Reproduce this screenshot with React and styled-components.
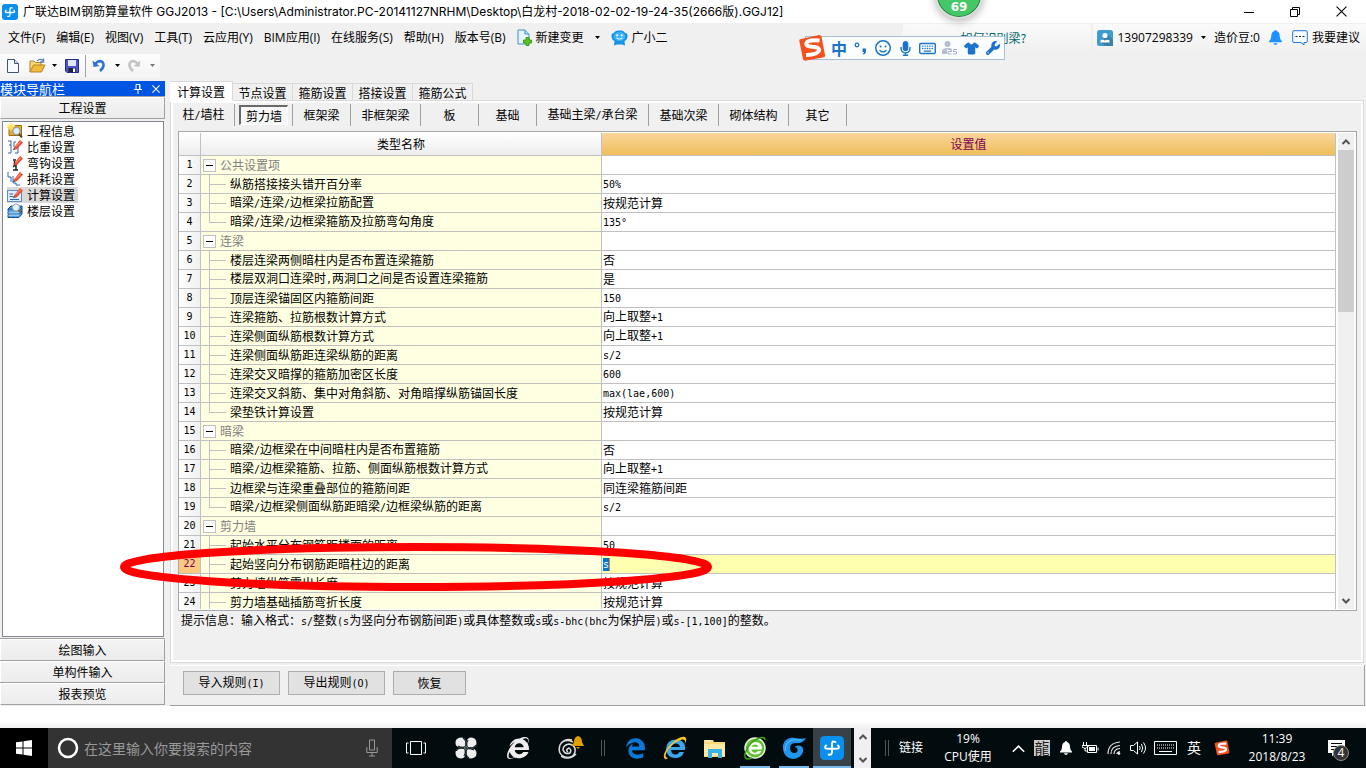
import React from "react";
import styled, { createGlobalStyle, css } from "styled-components";
import {
  FaEdgeLegacy,
  FaInternetExplorer,
  FaMicrophone,
  FaRegKeyboard,
  FaRegFaceSmile,
  FaShirt,
  FaWrench,
} from "react-icons/fa6";

const menus = [
  "文件(F)",
  "编辑(E)",
  "视图(V)",
  "工具(T)",
  "云应用(Y)",
  "BIM应用(I)",
  "在线服务(S)",
  "帮助(H)",
  "版本号(B)",
];

const tabs = ["计算设置", "节点设置", "箍筋设置", "搭接设置", "箍筋公式"];

const categories = [
  { name: "柱/墙柱", width: 62 },
  { name: "剪力墙", width: 58 },
  { name: "框架梁", width: 58 },
  { name: "非框架梁", width: 70 },
  { name: "板", width: 58 },
  { name: "基础", width: 58 },
  { name: "基础主梁/承台梁", width: 112 },
  { name: "基础次梁", width: 70 },
  { name: "砌体结构", width: 70 },
  { name: "其它", width: 58 },
];

const groups = [
  {
    name: "公共设置项",
    items: [
      ["纵筋搭接接头错开百分率", "50%"],
      ["暗梁/连梁/边框梁拉筋配置", "按规范计算"],
      ["暗梁/连梁/边框梁箍筋及拉筋弯勾角度", "135°"],
    ],
  },
  {
    name: "连梁",
    items: [
      ["楼层连梁两侧暗柱内是否布置连梁箍筋", "否"],
      ["楼层双洞口连梁时,两洞口之间是否设置连梁箍筋", "是"],
      ["顶层连梁锚固区内箍筋间距", "150"],
      ["连梁箍筋、拉筋根数计算方式", "向上取整+1"],
      ["连梁侧面纵筋根数计算方式", "向上取整+1"],
      ["连梁侧面纵筋距连梁纵筋的距离", "s/2"],
      ["连梁交叉暗撑的箍筋加密区长度", "600"],
      ["连梁交叉斜筋、集中对角斜筋、对角暗撑纵筋锚固长度", "max(lae,600)"],
      ["梁垫铁计算设置", "按规范计算"],
    ],
  },
  {
    name: "暗梁",
    items: [
      ["暗梁/边框梁在中间暗柱内是否布置箍筋", "否"],
      ["暗梁/边框梁箍筋、拉筋、侧面纵筋根数计算方式", "向上取整+1"],
      ["边框梁与连梁重叠部位的箍筋间距", "同连梁箍筋间距"],
      ["暗梁/边框梁侧面纵筋距暗梁/边框梁纵筋的距离", "s/2"],
    ],
  },
  {
    name: "剪力墙",
    more: true,
    items: [
      ["起始水平分布钢筋距楼面的距离", "50"],
      ["起始竖向分布钢筋距暗柱边的距离", "s"],
      ["剪力墙纵筋露出长度", "按规范计算"],
      ["剪力墙基础插筋弯折长度", "按规范计算"],
    ],
  },
];

const ACTIVE_ROW = 22;

const rows = groups.flatMap((group) => [
  { group: true, name: group.name, value: "" },
  ...group.items.map(([name, value], idx) => ({
    name,
    value,
    last: !group.more && idx === group.items.length - 1,
  })),
]);

// latin characters take half the width of a chinese one
const Song = ({ children }) =>
  children
    .split(/([\x20-\x7e°]+)/)
    .map((part, idx) => (idx % 2 ? <Half key={idx}>{part}</Half> : part));

/* ---------- icons ---------- */

const AppLogo = ({ size }) => (
  <svg width={size} height={size} viewBox="0 0 16 16">
    <rect width="16" height="16" rx="3" fill="#0a8fee" />
    <path
      d="M10.300 4Q8 2.800 8 5.500V10.500Q8 13 5.800 12.300M4 6.300Q2.300 8.500 5 8.500H11Q13.700 8.500 12 6.300"
      fill="none"
      stroke="#fff"
      strokeWidth="1.300"
      strokeLinecap="round"
    />
  </svg>
);

const Arrow = ({ color = "#000" }) => (
  <svg width="5" height="3" viewBox="0 0 5 3">
    <path d="M0 0H5L2.5 3Z" fill={color} />
  </svg>
);

const Chevron = ({ up, size = 8, color = "#555", weight = 2 }) => (
  <svg width={size} height={size} viewBox="0 0 8 8">
    <path d={up ? "M0.5 6L4 2.5L7.5 6" : "M0.5 2L4 5.5L7.5 2"} fill="none" stroke={color} strokeWidth={weight} />
  </svg>
);

const NewChangeIcon = () => (
  <svg width="15" height="17" viewBox="0 0 15 17">
    <path d="M1 1H8L12 5V15H1Z" fill="#e8f5fc" stroke="#3f93c9" />
    <path d="M8 1V5H12" fill="#b5dcf0" stroke="#3f93c9" />
    <path d="M9 8.500H12V11H14.500V14H12V16.500H9V14H6.500V11H9Z" fill="#5cc61c" stroke="#2c8f0c" strokeWidth=".8" />
  </svg>
);

const MascotIcon = () => (
  <svg width="17" height="16" viewBox="0 0 17 16">
    <path d="M3 3Q4 0 8.500 .5Q13 0 14 3Q17 3 16.500 7Q16 10 13.500 11L14 15.500L11 14.500H6L3 15.500L3.500 11Q1 10 .5 7Q0 3 3 3Z" fill="#1593e6" />
    <ellipse cx="8.500" cy="6.500" rx="5.800" ry="4.500" fill="#3fb2f5" />
    <circle cx="6.200" cy="5.300" r="1.100" fill="#fff" />
    <circle cx="10.800" cy="5.300" r="1.100" fill="#fff" />
    <path d="M5.500 8Q8.500 10.500 11.500 8" fill="none" stroke="#fff" />
  </svg>
);

const FileIcon = () => (
  <svg width="12" height="14" viewBox="0 0 12 14">
    <path d="M.5 .5H7.500L11.500 4.500V13.500H.5Z" fill="#f7fbff" stroke="#44566f" />
    <path d="M7.500 .5V4.500H11.500" fill="#cfdcea" stroke="#44566f" />
  </svg>
);

const OpenIcon = () => (
  <svg width="17" height="15" viewBox="0 0 17 15">
    <path d="M1 14V3H5L6.500 4.500H12V7" fill="#f6d77a" stroke="#b08728" />
    <path d="M1 14L4.500 7H16L12.500 14Z" fill="#f3b93d" stroke="#b08728" />
    <path d="M8 3Q11 0 14 2.500M14.500 .5V4H11" fill="none" stroke="#5b7fae" strokeWidth="1.300" />
  </svg>
);

const SaveIcon = () => (
  <svg width="14" height="14" viewBox="0 0 14 14">
    <path d="M.5 .5H13.500V13.500H2L.5 12Z" fill="#4b55c9" stroke="#272d86" />
    <rect x="3" y="1" width="8" height="6" fill="#dfe6f7" />
    <rect x="3.500" y="9" width="7" height="4" fill="#20242e" />
    <rect x="8" y="9.500" width="2" height="3.500" fill="#fff" />
  </svg>
);

const UndoIcon = ({ color, flip }) => (
  <svg width="14" height="14" viewBox="0 0 14 14">
    <g transform={flip ? "matrix(-1 0 0 1 14 0)" : undefined}>
      <path d="M3 5Q7 .5 10.500 3Q13.500 7 8 12" fill="none" stroke={color} strokeWidth="2.500" />
      <path d="M.5 1.500L1.500 8L7.500 7Z" fill={color} />
    </g>
  </svg>
);

const UserIcon = () => (
  <svg width="16" height="16" viewBox="0 0 16 16">
    <rect width="16" height="16" rx="2.500" fill="#3f9cd0" />
    <path d="M11 5L16 10V16H8L4 12Z" fill="#397fa8" />
    <circle cx="8" cy="5.500" r="2.600" fill="#fff" />
    <path d="M3.500 12.500V10.500Q5 8.800 8 10.500Q11 8.800 12.500 10.500V12.500Z" fill="#fff" />
  </svg>
);

const BellIcon = ({ color, size = 14 }) => (
  <svg width={size} height={size} viewBox="0 0 14 14">
    <path d="M7 0Q8 0 8 1Q11 2 11 6Q11 9 13 10.500V11.500H1V10.500Q3 9 3 6Q3 2 6 1Q6 0 7 0Z" fill={color} />
    <path d="M5 12.300H9Q8.500 14 7 14Q5.500 14 5 12.300Z" fill={color} />
  </svg>
);

const BubbleIcon = () => (
  <svg width="16" height="16" viewBox="0 0 16 16">
    <path d="M2 .7H14Q15.300 .7 15.300 2V11.300Q15.300 12.500 14 12.500H12V15L9 12.500H2Q.7 12.500 .7 11.300V2Q.7 .7 2 .7Z" fill="#f6fbff" stroke="#2277dd" />
    <path d="M3.500 6.500H13" stroke="#222" strokeDasharray="2 1.500" />
  </svg>
);

const SogouLogo = ({ size }) => (
  <svg width={size} height={size} viewBox="0 0 28 28">
    <path d="M3 5Q1 5 1.300 7L5 25Q5.500 27 8 26.600L25 23.500Q27.500 23 27 21L23.500 2.500Q23 .7 21 1Z" fill="#f4511e" />
    <path
      d="M21.500 6.500Q9 5.500 8.300 9.500Q8 12.500 14 12.800Q21.500 13 21 16.500Q20 20.500 8 21"
      fill="none"
      stroke="#fff"
      strokeWidth="4"
    />
  </svg>
);

const PersonIcon = () => (
  <svg width="17" height="16" viewBox="0 0 17 16">
    <circle cx="6.500" cy="4" r="3" fill="#b4bdd0" />
    <path d="M1 14V11Q2 8 6.500 8Q10 8 11 9H6V14Z" fill="#b4bdd0" />
    <path d="M7 9.500H10.500V11.500H7V14H10.500M16 9.500H12.500V11.500H15.500V14H12" fill="none" stroke="#a9b3c8" />
  </svg>
);

const PinIcon = () => (
  <svg width="8" height="10" viewBox="0 0 8 10">
    <path d="M2 .5H6V5.500H2ZM0 5.500H8M4 5.500V10M5.500 1V5" fill="none" stroke="#fff" />
  </svg>
);

const CrossIcon = ({ size, color, weight = 1 }) => (
  <svg width={size} height={size} viewBox="0 0 10 10">
    <path d="M.5 .5L9.500 9.500M9.500 .5L.5 9.500" stroke={color} strokeWidth={weight} />
  </svg>
);

const Pencil = () => (
  <>
    <path d="M7 8.500L13 1L16 3.500L9.500 10.500Z" fill="#ee4a2e" />
    <path d="M6 11L7 8.500L9 10.500Z" fill="#51402e" />
    <path d="M9 7.500L14 2.500" stroke="#ffa48c" />
  </>
);

const sideIcons = {
  info: (
    <>
      <path d="M2 4H7L8 2.500H14.500V12.500H2Z" fill="#e5aa32" stroke="#9b6c18" />
      <path d="M4 0V8M0 4H8M1.500 1.500L6.500 6.500M6.500 1.500L1.500 6.500" stroke="#ffe25a" strokeWidth="1.300" />
      <circle cx="9.500" cy="8" r="3.700" fill="#dceefc" stroke="#8091a6" />
      <path d="M12 11L15 14.500" stroke="#6b4a1a" strokeWidth="2" />
    </>
  ),
  weight: (
    <>
      <path d="M1 2H4V14H1M4 6H2M9 3H7V8M8 14H11V8" fill="none" stroke="#3a64b4" />
      <Pencil />
    </>
  ),
  hook: (
    <>
      <path d="M6 5H9M7.500 6V9M6 12L9 10V15M6 15H11" fill="none" stroke="#222" strokeWidth="1.500" />
      <Pencil />
    </>
  ),
  loss: (
    <>
      <path d="M1 1V6H4V11M6 5V12H9V14M9 14H13" fill="none" stroke="#3a64b4" />
      <Pencil />
    </>
  ),
  calc: (
    <>
      <rect x=".5" y="3.500" width="14" height="11" fill="#dcebff" stroke="#5c8bd0" />
      <path d="M2.500 7H6M2.500 9.500H6M3 12.500H12" stroke="#3a64b4" />
      <Pencil />
    </>
  ),
  floor: (
    <>
      <path d="M1 6L4 3H15L12 6ZM1 6V8.500H12L15 5M1 9V11.500H12L15 8M1 12V14.500H12L15 11V3" fill="#4fa0e0" stroke="#14518d" />
      <path d="M1.500 9H12M1.500 12H12" stroke="#d7efff" />
      <circle cx="9" cy="4.500" r="3.500" fill="#e4f2fc" stroke="#9aa7b5" />
      <path d="M11.500 7L14 9.500" stroke="#8c5c20" strokeWidth="1.500" />
    </>
  ),
};

const navItems = [
  { name: "工程信息", icon: "info" },
  { name: "比重设置", icon: "weight" },
  { name: "弯钩设置", icon: "hook" },
  { name: "损耗设置", icon: "loss" },
  { name: "计算设置", icon: "calc", active: true },
  { name: "楼层设置", icon: "floor" },
];

/* ---------- sections ---------- */

const Header = () => (
  <>
    <TitleBar>
      <AppLogo size={16} />
      <TitleText>
        广联达BIM钢筋算量软件 GGJ2013 - [C:\Users\Administrator.PC-20141127NRHM\Desktop\白龙村-2018-02-02-19-24-35(2666版).GGJ12]
      </TitleText>
      <WindowButton aria-label="最小化">
        <svg width="10" height="10" viewBox="0 0 10 10"><path d="M0 5.500H10" stroke="#000" /></svg>
      </WindowButton>
      <WindowButton aria-label="还原">
        <svg width="10" height="10" viewBox="0 0 10 10">
          <path d="M.5 2.500H7.500V9.500H.5ZM2.500 2.500V.5H9.500V7.500H7.500" fill="none" stroke="#000" />
        </svg>
      </WindowButton>
      <WindowButton aria-label="关闭"><CrossIcon size={11} color="#000" /></WindowButton>
    </TitleBar>
    <MenuBar>
      {menus.map((name) => (
        <MenuButton key={name}>{name}</MenuButton>
      ))}
      <MenuButton><NewChangeIcon />新建变更</MenuButton>
      <ArrowButton aria-label="新建变更选项"><Arrow /></ArrowButton>
      <MenuButton><MascotIcon />广小二</MenuButton>
      <HintBox><a href="#help">如何识别梁?</a></HintBox>
      <UserBox>
        <UserIcon />
        <UserName>13907298339</UserName>
        <Arrow />
        <Beans>造价豆:0</Beans>
        <BellIcon color="#1e90ff" size={15} />
        <MenuButton><BubbleIcon />我要建议</MenuButton>
      </UserBox>
    </MenuBar>
    <ToolBar>
      <Tools>
        <ToolButton $width={24} aria-label="新建"><FileIcon /></ToolButton>
        <ToolButton $width={24} aria-label="打开"><OpenIcon /></ToolButton>
        <ToolButton $width={10} aria-label="打开选项"><Arrow /></ToolButton>
        <ToolButton $width={26} aria-label="保存"><SaveIcon /></ToolButton>
        <ToolDivider />
        <ToolButton $width={26} aria-label="撤销"><UndoIcon color="#2f6fd6" /></ToolButton>
        <ToolButton $width={10} aria-label="撤销选项"><Arrow /></ToolButton>
        <ToolButton $width={24} aria-label="重做"><UndoIcon color="#c4c4c4" flip /></ToolButton>
        <ToolButton $width={12} aria-label="重做选项"><Arrow color="#777" /></ToolButton>
      </Tools>
    </ToolBar>
  </>
);

const Navigator = () => (
  <Sidebar>
    <Caption>
      <span>模块导航栏</span>
      <CaptionButton aria-label="固定"><PinIcon /></CaptionButton>
      <CaptionButton aria-label="关闭导航栏"><CrossIcon size={8} color="#fff" weight={1.3} /></CaptionButton>
    </Caption>
    <PanelButton>工程设置</PanelButton>
    <NavList>
      {navItems.map(({ name, icon, active }) => (
        <li key={name}>
          <NavButton $active={active}>
            <svg width="16" height="16" viewBox="0 0 16 16">{sideIcons[icon]}</svg>
            <span>{name}</span>
          </NavButton>
        </li>
      ))}
    </NavList>
    <PanelButton>绘图输入</PanelButton>
    <PanelButton>单构件输入</PanelButton>
    <PanelButton>报表预览</PanelButton>
  </Sidebar>
);

const SettingsTable = () => (
  <TableFrame>
    <TableScroll>
      <Table>
        <colgroup>
          <col style={{ width: 22 }} />
          <col style={{ width: 401 }} />
          <col />
        </colgroup>
        <thead>
          <tr>
            <HeadCell aria-label="序号" />
            <HeadCell>类型名称</HeadCell>
            <HeadCell $active>设置值</HeadCell>
          </tr>
        </thead>
        <tbody>
          {rows.map(({ group, name, value, last }, idx) => {
            const active = idx + 1 === ACTIVE_ROW;
            return (
              <tr key={idx}>
                <NumberCell $active={active}>{idx + 1}</NumberCell>
                <NameCell>
                  <NameContent $group={group}>
                    {group ? <FoldButton aria-label={"折叠" + name} /> : <Branch $last={last} />}
                    <span><Song>{name}</Song></span>
                  </NameContent>
                </NameCell>
                <ValueCell $active={active}>
                  {active ? <ValueInput aria-label={name} defaultValue={value} /> : <Song>{value}</Song>}
                </ValueCell>
              </tr>
            );
          })}
        </tbody>
      </Table>
    </TableScroll>
    <ScrollBar>
      <ScrollButton aria-label="向上滚动"><Chevron up /></ScrollButton>
      <ScrollThumb />
      <ScrollButton aria-label="向下滚动"><Chevron /></ScrollButton>
    </ScrollBar>
  </TableFrame>
);

const Workspace = () => (
  <Work>
    <TabRow>
      {tabs.map((name, idx) => (
        <Tab key={name} $active={idx === 0}>{name}</Tab>
      ))}
    </TabRow>
    <TabPage>
      <Categories>
        {categories.map(({ name, width }, idx) => (
          <Category key={name} $width={width}>
            <CategoryButton $pressed={idx === 1}><Song>{name}</Song></CategoryButton>
          </Category>
        ))}
      </Categories>
      <SettingsTable />
      <Hint>
        <Song>提示信息：输入格式：s/整数(s为竖向分布钢筋间距)或具体整数或s或s-bhc(bhc为保护层)或s-[1,100]的整数。</Song>
      </Hint>
    </TabPage>
    <Actions>
      <ActionButton $width={97}><Song>导入规则(I)</Song></ActionButton>
      <ActionButton $width={97}><Song>导出规则(O)</Song></ActionButton>
      <ActionButton $width={73}>恢复</ActionButton>
    </Actions>
  </Work>
);

const InputMethod = () => (
  <ImeBar>
    <SogouLogo size={28} />
    <ImeItem as="span">中</ImeItem>
    <ImeItem aria-label="中文标点">
      <svg width="14" height="14" viewBox="0 0 14 14">
        <circle cx="3" cy="4" r="1.800" fill="none" stroke="#1b74c9" strokeWidth="1.300" />
        <path d="M8.500 7.500H12V10.500Q12 13 9 13.500L8.700 12.500Q10 12 10 11H8.500Z" fill="#1b74c9" />
      </svg>
    </ImeItem>
    <ImeItem aria-label="表情"><FaRegFaceSmile size={16} /></ImeItem>
    <ImeItem aria-label="语音"><FaMicrophone size={15} /></ImeItem>
    <ImeItem aria-label="软键盘"><FaRegKeyboard size={17} /></ImeItem>
    <ImeItem aria-label="账户"><PersonIcon /></ImeItem>
    <ImeItem aria-label="皮肤"><FaShirt size={15} /></ImeItem>
    <ImeItem aria-label="工具箱"><FaWrench size={14} /></ImeItem>
  </ImeBar>
);

const TaskBar = () => (
  <Tasks>
    <TaskButton $width={48} $bg="#000" aria-label="开始">
      <svg width="16" height="16" viewBox="0 0 16 16">
        <path d="M0 2.300L6.500 1.400V7.500H0ZM7.500 1.200L16 0V7.500H7.500ZM0 8.500H6.500V14.600L0 13.700ZM7.500 8.500H16V16L7.500 14.800Z" fill="#fff" />
      </svg>
    </TaskButton>
    <Search>
      <svg width="24" height="24" viewBox="0 0 24 24">
        <circle cx="12" cy="12" r="9" fill="none" stroke="#fff" strokeWidth="2.500" />
      </svg>
      <SearchInput aria-label="搜索" placeholder="在这里输入你要搜索的内容" />
      <svg width="12" height="18" viewBox="0 0 12 18">
        <path d="M3.500 1H8.500V11H3.500ZM.8 8V13.500H11.200V8M6 13.500V17M3 17H9" fill="none" stroke="#999" />
      </svg>
    </Search>
    <TaskButton $width={48} aria-label="任务视图">
      <svg width="20" height="14" viewBox="0 0 20 14">
        <path d="M4.500 .5H15.500V13.500H4.500ZM2.500 2H.5V12H2.500M17.500 2H19.500V12H17.500" fill="none" stroke="#fff" />
      </svg>
    </TaskButton>
    <TaskButton $width={52} aria-label="应用">
      <svg width="22" height="22" viewBox="0 0 22 22">
        <g fill="#eee">
          <path d="M10.500 10.500H5Q.5 10 .5 5.500Q.5 .8 6 .5Q10.500 .5 10.500 5Z" />
          <path d="M11.500 10.500V5Q12 .5 16.500 .5Q21.300 .8 21.500 6Q21.500 10.500 17 10.500Z" />
          <path d="M11.500 11.500H17Q21.500 12 21.500 16.500Q21.300 21.200 16 21.500Q11.500 21.500 11.500 17Z" />
          <path d="M10.500 11.500V17Q10 21.500 5.500 21.500Q.8 21.300 .5 16Q.5 11.500 5 11.500Z" />
        </g>
        <path d="M3 9Q9 12 11 8Q12 4 8 1M13 3Q10 9 14 11Q18 12 21 8M19 13Q12 10 11 14Q10 18 14 21M9 19Q12 13 8 11Q4 10 1 14" fill="none" stroke="#061014" />
      </svg>
    </TaskButton>
    <TaskButton $width={52} aria-label="浏览器"><FaInternetExplorer size={22} color="#eee" /></TaskButton>
    <TaskButton $width={54} aria-label="提醒">
      <svg width="28" height="26" viewBox="0 0 28 26">
        <path d="M16 7Q7 3 3 10Q0 19 8 22Q16 24 18 17Q19 10 12 9Q6 10 6 15Q8 20 13 18Q15 15 12 13Q8 15 11 17M4 8Q9 3 15 5M4 21Q12 26 19 19" fill="none" stroke="#ddd" strokeWidth="1.500" />
        <path d="M21 1Q25 2 25 7L27 11H15L17 7Q17 2 21 1Z" fill="#e0a000" />
        <path d="M19 12H23L21 14Z" fill="#e0a000" />
      </svg>
    </TaskButton>
    <Grip $width={17} />
    <TaskButton $width={40} aria-label="Edge"><FaEdgeLegacy size={21} color="#0a78d7" /></TaskButton>
    <TaskButton $width={40} aria-label="Internet Explorer">
      <svg width="26" height="26" viewBox="0 0 26 26">
        <path d="M22 17H17.500Q16 19.500 13.500 19.500Q9.500 19.500 9 15H23Q24 5 14 4.500Q4 5 4 14.500Q5 23 13.500 23Q20 23 22 17ZM9 12Q10 8.500 13.500 8.500Q17.500 8.500 18 12Z" fill="#3aa7ec" />
        <path d="M3 24Q-1 20 8 10Q18 0 23 2Q26 4 22 10Q25 4 20 4.500Q13 6 6 15Q1 22 6 23Q4 25 3 24Z" fill="#f7c325" />
      </svg>
    </TaskButton>
    <TaskButton $width={40} aria-label="文件资源管理器">
      <svg width="22" height="19" viewBox="0 0 22 19">
        <path d="M0 1H9L10 3H21V18H0Z" fill="#f8d775" />
        <path d="M1 2H7" stroke="#fff" />
        <path d="M0 5H21V17H0Z" fill="#ffe9a2" />
        <path d="M4 10H18V19H14V14H8V19H4Z" fill="#38b4e8" />
      </svg>
    </TaskButton>
    <TaskButton $width={40} $open aria-label="360浏览器">
      <svg width="24" height="26" viewBox="0 0 24 26">
        <circle cx="12" cy="13" r="10" fill="#5dc22d" stroke="#e4f5dc" strokeWidth="1.500" />
        <path d="M18.500 16H15Q14 17.800 12.300 17.800Q9 17.800 8.500 14.500H19Q19.500 7 12.300 7Q5.500 7 5.500 13Q6 19.500 12 19.500Q17 19.500 18.500 16ZM8.500 11.800Q9.500 9.500 12.300 9.500Q15 9.500 15.500 11.800Z" fill="#fff" />
        <path d="M22 5Q22 0 12 5Q4 11 2 19Q1 26 9 23" fill="none" stroke="#3b9f18" strokeWidth="1.500" />
      </svg>
    </TaskButton>
    <TaskButton $width={38} $open aria-label="广联达">
      <svg width="24" height="24" viewBox="0 0 24 24">
        <path d="M24 2Q21 8 14 7Q8 7 8 12Q8 17 12.500 17Q16 17 15.500 13Q15 11 12.500 11Q15 8.500 19 10Q22 12 21 16Q18 23 11 23Q2 22 1 13Q0 3 10 1.500Q19 3.500 24 2Z" fill="#2096ee" />
        <path d="M3 15Q3 5 12 3.500Q17 4.500 20 4" fill="none" stroke="#5cc4fb" />
      </svg>
    </TaskButton>
    <TaskButton $width={38} $open $bg="#374146" aria-label="GGJ2013"><AppLogo size={24} /></TaskButton>
    <TaskScroll>
      <ScrollButton aria-label="上一组"><Chevron up /></ScrollButton>
      <ScrollButton aria-label="下一组"><Chevron /></ScrollButton>
    </TaskScroll>
    <Tray>
      <Grip $width={10} />
      <TrayText $width={38}>链接</TrayText>
      <TrayText $width={76}>19%<br />CPU使用</TrayText>
      <TrayItem aria-label="显示隐藏的图标"><Chevron up size={13} color="#fff" weight={1} /></TrayItem>
      <TrayItem><Dragon>龍</Dragon></TrayItem>
      <TrayItem aria-label="通知"><BellIcon color="#fff" /></TrayItem>
      <TrayItem aria-label="电源">
        <svg width="17" height="12" viewBox="0 0 17 12">
          <path d="M5.500 3.500H14.500V10.500H5.500ZM16 5.500V8.500M1.500 0V3M4.500 0V3M0 3.500H6V5Q3 8 0 5ZM3 6V9H5" fill="none" stroke="#fff" />
          <path d="M7 5H13V9H7Z" fill="#fff" />
        </svg>
      </TrayItem>
      <TrayItem aria-label="网络">
        <svg width="14" height="14" viewBox="0 0 14 14">
          <path d="M1 13Q1 2 13 1M4 13Q4 5 13 4.500M7 13Q7 8 13 7.500M10 13Q10 11 13 10.500" fill="none" stroke="#ddd" strokeWidth="1.200" />
          <circle cx="12" cy="12.500" r="1.300" fill="#fff" />
        </svg>
      </TrayItem>
      <TrayItem aria-label="音量">
        <svg width="17" height="14" viewBox="0 0 17 14">
          <path d="M.5 4.500H3.500L7.500 1V13L3.500 9.500H.5ZM9.500 5Q11 7 9.500 9M11.500 3Q14 7 11.500 11M13.500 1.500Q17.500 7 13.500 12.500" fill="none" stroke="#fff" />
        </svg>
      </TrayItem>
      <TrayItem $width={30} aria-label="触摸键盘">
        <svg width="23" height="14" viewBox="0 0 23 14">
          <path d="M.5 .5H22.500V13.500H.5Z" fill="none" stroke="#fff" />
          <path d="M3 4H21M3 7H21" stroke="#fff" strokeDasharray="1 1" />
          <path d="M5 10.500H18" stroke="#fff" />
        </svg>
      </TrayItem>
      <TrayItem $width={28}>英</TrayItem>
      <TrayItem $width={28} aria-label="搜狗输入法"><SogouLogo size={16} /></TrayItem>
      <TrayText $width={82}>11:39<br />2018/8/23</TrayText>
      <Notice aria-label="操作中心">
        <svg width="17" height="17" viewBox="0 0 17 17">
          <path d="M0 0H17V13H7L4 16.500V13H0Z" fill="#fff" />
          <path d="M3 3.500H14M3 6.500H14M3 9.500H10" stroke="#000" />
        </svg>
        <Badge>4</Badge>
      </Notice>
    </Tray>
  </Tasks>
);

const App = () => (
  <Page>
    <GlobalStyle />
    <Header />
    <Main>
      <Navigator />
      <Workspace />
    </Main>
    <StatusBar />
    <TaskBar />
    <InputMethod />
    <SpeedBall>69</SpeedBall>
    <Marker viewBox="0 0 594 50">
      <ellipse cx="297" cy="25" rx="292" ry="20" fill="none" stroke="#fe0000" strokeWidth="8" />
    </Marker>
  </Page>
);

export default App;

/* ---------- styles ---------- */

const GlobalStyle = createGlobalStyle`
  * {
    box-sizing: border-box;
  }

  body {
    margin: 0;
    overflow: hidden;
    font-family: "Noto Sans CJK SC", sans-serif;
    font-size: 12px;
    line-height: 18px;
    color: #000;
  }

  button {
    font: inherit;
    color: inherit;
    padding: 0;
    border: 0;
    background: none;
    white-space: nowrap;
  }

  svg {
    display: block;
    flex: none;
  }
`;

const uiFont = css`
  font-family: "Open Sans", "Noto Sans CJK SC", sans-serif;
`;

const Half = styled.span`
  font-family: "DejaVu Sans Mono", monospace;
  font-size: 10px;
`;

const Page = styled.div`
  position: relative;
  display: flex;
  flex-direction: column;
  height: 100vh;
  background: #f0f0f0;
`;

const TitleBar = styled.header`
  display: flex;
  align-items: center;
  height: 23px;
  padding: 0 2px;
  background: #fff;
`;

const TitleText = styled.h1`
  flex: 1;
  margin: 0 0 0 5px;
  font-family: Inter, "Noto Sans CJK SC", sans-serif;
  font-size: 12px;
  font-weight: 400;
  white-space: nowrap;
`;

const WindowButton = styled.button`
  width: 46px;
  height: 20px;
  display: flex;
  align-items: center;
  justify-content: center;
`;

const MenuBar = styled.nav`
  ${uiFont}
  display: flex;
  align-items: center;
  gap: 11px;
  height: 31px;
  padding: 0 0 2px 8px;
`;

const MenuButton = styled.button`
  display: flex;
  align-items: center;
  gap: 4px;
`;

const ArrowButton = styled.button`
  width: 5px;
`;

const HintBox = styled.div`
  width: 188px;
  height: 28px;
  margin-left: auto;
  padding: 5px 0 0 57px;
  background: linear-gradient(#fafafa, #f0f0f0);
  border-radius: 3px;

  a {
    font-family: "Noto Sans CJK SC", sans-serif;
    color: #006666;
    text-decoration: none;
  }
`;

const UserBox = styled.div`
  display: flex;
  align-items: center;
  height: 28px;
  margin-left: -9px;
  padding: 0 6px 0 4px;
  background: linear-gradient(#fafafa, #f0f0f0);
`;

const UserName = styled.span`
  margin: 0 8px 0 4px;
`;

const Beans = styled.span`
  margin: 0 8px 0 8px;

  & + svg + button {
    margin-left: 9px;
  }
`;

const ToolBar = styled.div`
  height: 27px;
`;

const Tools = styled.div`
  display: flex;
  align-items: center;
  width: 160px;
  height: 23px;
  padding-left: 1px;
  background: linear-gradient(#fdfdfd, #f4f4f4);
`;

const ToolButton = styled.button`
  display: flex;
  justify-content: center;
  width: ${({ $width }) => $width}px;
`;

const ToolDivider = styled.span`
  width: 1px;
  height: 22px;
  background: #a0a0a0;
`;

const Main = styled.main`
  flex: 1;
  display: flex;
  gap: 5px;
  min-height: 0;
`;

const Sidebar = styled.aside`
  display: flex;
  flex-direction: column;
  width: 165px;
  padding-bottom: 1px;
`;

const Caption = styled.div`
  display: flex;
  align-items: center;
  height: 15px;
  margin-bottom: 1px;
  color: #fff;
  background: #0054e3;
  font-size: 13px;
  line-height: 13px;

  span {
    flex: 1;
  }
`;

const CaptionButton = styled.button`
  display: flex;
  justify-content: center;
  width: 18px;
`;

const PanelButton = styled.button`
  height: 22px;
  border: 1px solid #a0a0a0;
  border-left-color: #fff;
  border-top-color: #fff;
  box-shadow: 0 -1px #a0a0a0;
  background: linear-gradient(#f4f4f4, #ececec);
`;

const NavList = styled.ul`
  flex: 1;
  margin: 2px 1px 2px 2px;
  padding: 1px 4px;
  list-style: none;
  background: #fff;
  border: 1px solid #828790;
`;

const NavButton = styled.button`
  display: flex;
  gap: 4px;
  height: 16px;
  padding-right: 3px;
  line-height: 16px;

  ${({ $active }) =>
    $active &&
    css`
      background: #d9d9d9;
    `}
`;

const Work = styled.section`
  flex: 1;
  display: flex;
  flex-direction: column;
  min-width: 0;
  padding-right: 1px;
`;

const TabRow = styled.div`
  display: flex;
  align-items: flex-end;
  height: 19px;
`;

const Tab = styled.button`
  width: 60px;
  height: 17px;
  line-height: 15px;
  border: 1px solid #d9d9d9;
  border-left: 0;
  border-bottom: 0;

  ${({ $active }) =>
    $active &&
    css`
      z-index: 1;
      width: 63px;
      height: 19px;
      background: #fff;
      box-shadow: 0 2px #fff;
    `}
`;

const TabPage = styled.div`
  flex: 1;
  display: flex;
  flex-direction: column;
  min-height: 0;
  margin-right: 1px;
  border: 1px solid #d9d9d9;
  box-shadow: inset 0 0 0 2px #fff;
  padding: 3px 6px 0 2px;
`;

const Categories = styled.div`
  display: flex;
  height: 22px;
  margin-bottom: 5px;
`;

const Category = styled.div`
  display: flex;
  align-items: center;
  justify-content: center;
  width: ${({ $width }) => $width}px;
  border-right: 1px solid #a0a0a0;
`;

const CategoryButton = styled.button`
  height: 20px;
  padding: 0 5px;
  line-height: 18px;

  ${({ $pressed }) =>
    $pressed &&
    css`
      border: 1px solid #fff;
      border-top: 2px solid #696969;
      border-left: 2px solid #696969;
      background: #f7f7f7;
    `}
`;

const TableFrame = styled.div`
  flex: 1;
  display: flex;
  gap: 2px;
  min-height: 0;
  margin-left: 5px;
  padding: 1px 2px 1px 0;
  border: 1px solid #a7a6aa;
  background: #fff;
`;

const TableScroll = styled.div`
  flex: 1;
  overflow: hidden;
`;

const Table = styled.table`
  width: 100%;
  table-layout: fixed;
  border-collapse: separate;
  border-spacing: 0;

  th,
  td {
    padding: 0;
    border-right: 1px solid #c0c0c0;
    border-bottom: 1px solid #c0c0c0;
    white-space: nowrap;
  }

  td {
    height: 19px;
  }
`;

const HeadCell = styled.th`
  height: 23px;
  font-weight: 400;
  background: linear-gradient(#fff, #ededed);

  ${({ $active }) =>
    $active &&
    css`
      color: #7d0053;
      background: linear-gradient(#f9d59b, #efbf5c);
    `}
`;

const NumberCell = styled.td`
  font-family: "DejaVu Sans Mono", monospace;
  font-size: 10px;
  text-align: center;
  background: linear-gradient(90deg, #fff, #f0f0f0);

  ${({ $active }) =>
    $active &&
    css`
      color: #7d0053;
      background: #fbc97f;
    `}
`;

const NameCell = styled.td`
  background: #ffffe1;
`;

const NameContent = styled.div`
  display: flex;
  align-items: center;
  gap: 4px;
  height: 18px;
  padding-left: ${({ $group }) => ($group ? 2 : 8)}px;
  color: ${({ $group }) => ($group ? "#808080" : "#000")};
`;

const FoldButton = styled.button`
  width: 13px;
  height: 13px;
  border: 1px solid #c0c0c0;
  background: linear-gradient(#000, #000) center / 7px 1px no-repeat #fff;
`;

const Branch = styled.span`
  width: 17px;
  height: 18px;
  background:
    linear-gradient(#c0c0c0, #c0c0c0) 0 9px / 17px 1px no-repeat,
    linear-gradient(#c0c0c0, #c0c0c0) 0 0 / 1px ${({ $last }) => ($last ? "9px" : "18px")} no-repeat;
`;

const ValueCell = styled.td`
  && {
    padding-left: 1px;
  }
  line-height: 16px;
  background: ${({ $active }) => ($active ? "#ffffb0" : "#fff")};
`;

const ValueInput = styled.input`
  display: block;
  width: 7px;
  height: 13px;
  padding: 0;
  border: 0;
  border-right: 1px solid #e08040;
  color: #fff;
  background: #0078d7;
  font-family: "DejaVu Sans Mono", monospace;
  font-size: 10px;
`;

const ScrollBar = styled.div`
  display: flex;
  flex-direction: column;
  width: 16px;
  background: #f0f0f0;
`;

const ScrollButton = styled.button`
  flex: none;
  display: flex;
  align-items: center;
  justify-content: center;
  height: 17px;
`;

const ScrollThumb = styled.div`
  height: 162px;
  margin-bottom: auto;
  background: #cdcdcd;
`;

const Hint = styled.p`
  height: 51px;
  margin: 0;
  padding-left: 8px;
`;

const Actions = styled.div`
  display: flex;
  align-items: flex-start;
  gap: 8px;
  height: 41px;
  margin-top: 2px;
  padding: 6px 0 0 13px;
  border: solid #a0a0a0;
  border-width: 0 1px 1px 0;
  box-shadow: inset 0 1px #fff;
`;

const ActionButton = styled.button`
  width: ${({ $width }) => $width}px;
  height: 24px;
  border: 1px solid #adadad;
  background: #e1e1e1;
`;

const StatusBar = styled.div`
  height: 22px;
  background: linear-gradient(#fff 70%, #f0f0f0);
`;

const Tasks = styled.footer`
  ${uiFont}
  display: flex;
  height: 40px;
  color: #fff;
  background: #020c0f;
`;

const TaskButton = styled.button`
  display: flex;
  align-items: center;
  justify-content: center;
  width: ${({ $width }) => $width}px;
  background: ${({ $bg }) => $bg || "none"};

  ${({ $open }) =>
    $open &&
    css`
      background-image: linear-gradient(#76b9ed, #76b9ed);
      background-position: bottom;
      background-size: ${({ $bg }) => ($bg ? "100%" : "30px")} 2px;
      background-repeat: no-repeat;
    `}
`;

const Search = styled.div`
  display: flex;
  align-items: center;
  width: 344px;
  padding: 0 14px 0 8px;
  background: #333;
`;

const SearchInput = styled.input`
  flex: 1;
  min-width: 0;
  padding: 0 4px;
  border: 0;
  outline: 0;
  color: #fff;
  background: none;
  font: 14px "Noto Sans CJK SC", sans-serif;

  &::placeholder {
    color: #999;
  }
`;

const Grip = styled.span`
  align-self: center;
  width: ${({ $width }) => $width}px;
  height: 16px;
  background:
    linear-gradient(#555, #555) 3px 0 / 1px 16px no-repeat,
    linear-gradient(#555, #555) 6px 0 / 1px 16px no-repeat;
`;

const TaskScroll = styled.div`
  display: flex;
  flex-direction: column;
  justify-content: space-between;
  width: 17px;
  margin-left: 3px;
  color: #555;
  background: #f0f0f0;
`;

const Tray = styled.div`
  display: flex;
  align-items: center;
  margin-left: auto;
  padding-right: 12px;
`;

const TrayText = styled.div`
  width: ${({ $width }) => $width}px;
  text-align: center;
`;

const TrayItem = styled.button`
  display: flex;
  align-items: center;
  justify-content: center;
  width: ${({ $width = 24 }) => $width}px;
  font-size: 14px;
`;

const Dragon = styled.span`
  width: 16px;
  color: #222;
  background: #ccc;
  font-size: 15px;
  line-height: 16px;
`;

const Notice = styled.button`
  position: relative;
  display: flex;
  justify-content: center;
  width: 36px;
`;

const Badge = styled.span`
  position: absolute;
  left: 15px;
  top: 5px;
  width: 16px;
  height: 16px;
  border: 1px solid #888;
  border-radius: 50%;
  background: #333;
  line-height: 14px;
`;

const ImeBar = styled.div`
  position: absolute;
  left: 805px;
  top: 36px;
  display: flex;
  align-items: center;
  width: 200px;
  height: 24px;
  border: 1px solid #a9bfd8;
  background: #fbfdff;

  & > svg {
    margin: 0 2px 0 -8px;
  }
`;

const ImeItem = styled.button`
  display: flex;
  align-items: center;
  justify-content: center;
  width: 22px;
  color: #1b74c9;
  font-size: 16px;
  font-weight: 700;
`;

const SpeedBall = styled.div`
  position: absolute;
  left: 935px;
  top: -29px;
  width: 48px;
  height: 48px;
  padding-top: 26px;
  border: 2px solid #ddd;
  border-radius: 50%;
  box-shadow: inset 0 0 0 1px #2a7d48, 0 2px 8px rgba(0, 0, 0, 0.3);
  color: #fff;
  background: #44c766;
  font-family: "DejaVu Sans", sans-serif;
  font-weight: 700;
  line-height: 16px;
  text-align: center;
`;

const Marker = styled.svg`
  position: absolute;
  left: 119px;
  top: 542px;
  width: 594px;
  height: 50px;
  pointer-events: none;
`;
